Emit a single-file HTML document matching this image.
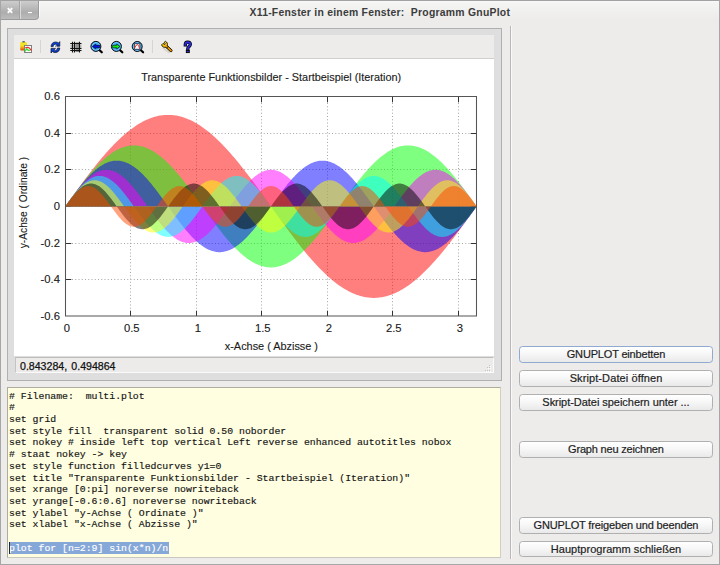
<!DOCTYPE html>
<html><head><meta charset="utf-8">
<style>
*{margin:0;padding:0;box-sizing:border-box}
html,body{width:720px;height:565px;overflow:hidden;background:#edeceb}
body{position:relative;font-family:"Liberation Sans",sans-serif}
.a{position:absolute}
#winL{left:0;top:0;width:1px;height:565px;background:#a6a6a6}
#winR{left:719px;top:0;width:1px;height:565px;background:#a6a6a6}
#winB{left:0;top:564px;width:720px;height:1px;background:#a6a6a6}
#winT{left:0;top:0;width:720px;height:1px;background:#a2a2a2}
#titlebar{left:1px;top:1px;width:718px;height:24px;background:linear-gradient(#fafafa,#f4f4f3 2px,#edeceb 18px)}
#btns{left:1px;top:1px;width:39px;height:19px;border-bottom-right-radius:4px;background:linear-gradient(#cfcfcf,#aeaeae);overflow:hidden}
#btndiv{left:19px;top:0;width:1px;height:19px;background:#dadada}
.btxt{color:#fff;font-weight:bold;font-size:13px;text-align:center;width:19px;top:1px;line-height:16px}
#title{left:249.5px;top:6px;font-weight:bold;font-size:10.4px;letter-spacing:0.25px;color:#3c3c3c;white-space:nowrap;line-height:14px}
#frame{left:7px;top:28px;width:495px;height:353px;border:1px solid #b0b0b0;background:#dedede}
#toolbar{left:14px;top:35px;width:480px;height:23px;background:#edeceb}
.sep{top:40px;width:1px;height:13px;background:#d6d5d4}
#plot{left:14px;top:58px;width:480px;height:298px;background:#fff;border-top:1px solid #d0cfcd}
#svg{left:0;top:0}
#status{left:14px;top:356px;width:480px;height:17px;background:#dedede}
#statbox{left:15px;top:357px;width:479px;height:16px;background:#ecebea;border-top:1px solid #bdbdbd;border-left:1px solid #c4c4c4;border-bottom:1px solid #fafafa;border-right:1px solid #fafafa}
.stt{top:360px;font-size:10.6px;color:#111;line-height:12px;white-space:nowrap;-webkit-text-stroke:0.25px #111}
#sepV{left:510px;top:26px;width:1px;height:533px;background:#b9b8b7;border-right:1px solid #f8f8f8;width:2px}
#editor{left:7px;top:387px;width:494px;height:171px;background:#fffee0;border:1px solid #aeaea0;border-right-color:#d0d0c0;border-bottom-color:#c8c8c0}
#code{left:9px;top:390.5px;font-family:"Liberation Mono",monospace;font-size:9.83px;line-height:11.72px;color:#141414;white-space:pre;font-weight:normal;-webkit-text-stroke:0.15px currentColor}
#sel{left:9px;top:542px;width:160px;height:12px;background:#86a8d8}
#cursor{left:9px;top:542px;width:1px;height:12px;background:#1a2a3a}
.btn{left:519px;width:194px;height:17px;border:1px solid #b0b0b0;border-radius:3.5px;background:linear-gradient(#ffffff,#f6f6f6 50%,#e9e9e9);font-size:11px;color:#1e1e1e;text-align:center;line-height:15.5px;white-space:nowrap;-webkit-text-stroke:0.2px #1e1e1e}
.btn.f{border-color:#8eaad0}
</style></head><body>
<div class="a" id="titlebar"></div>
<div class="a" id="winT"></div>
<div class="a" id="winL"></div>
<div class="a" id="winR"></div>
<div class="a" id="winB"></div>
<svg class="a" style="left:0;top:0" width="44" height="24" viewBox="0 0 44 24">
<defs><linearGradient id="gBt" x1="0" y1="0" x2="0" y2="1"><stop offset="0" stop-color="#cdcdcd"/><stop offset="0.6" stop-color="#adadad"/><stop offset="1" stop-color="#bebebe"/></linearGradient></defs>
<path d="M1 1H39V16A4 4 0 0 1 35 20H1Z" fill="url(#gBt)"/>
<path d="M38.5 1V16A3.5 3.5 0 0 1 35 19.5H1" fill="none" stroke="#9c9c9c" stroke-width="1"/>
<path d="M39.5 2V16.5" stroke="#fbfbfb" stroke-width="1"/>
<rect x="19" y="1" width="1" height="18" fill="#a4a4a4"/>
<rect x="20" y="1" width="1" height="18" fill="#dadada"/>
<path d="M7.8 8.2L12.2 12.8M12.2 8.2L7.8 12.8" stroke="#fff" stroke-width="1.9"/>
<rect x="28" y="12" width="4" height="1.1" fill="#fff"/>
</svg>
<div class="a" id="title">X11-Fenster in einem Fenster:&nbsp; Programm GnuPlot</div>

<div class="a" id="frame"></div>
<div class="a" id="toolbar"></div>
<div class="a sep" style="left:40px"></div>
<div class="a sep" style="left:152px"></div>

<svg class="a" style="left:0;top:0" width="720" height="60" viewBox="0 0 720 60">
<defs>
<linearGradient id="gY" x1="0" y1="0" x2="0" y2="1"><stop offset="0" stop-color="#f0e830"/><stop offset="0.45" stop-color="#f4e020"/><stop offset="1" stop-color="#e04a08"/></linearGradient>
<radialGradient id="gB" cx="0.5" cy="0.5" r="0.5"><stop offset="0" stop-color="#2a8ae8"/><stop offset="0.55" stop-color="#3aa4f4"/><stop offset="0.8" stop-color="#70c8ff"/><stop offset="1" stop-color="#1060c0"/></radialGradient>
<linearGradient id="gW" x1="0" y1="0" x2="1" y2="1"><stop offset="0" stop-color="#f0f020"/><stop offset="0.5" stop-color="#f8c010"/><stop offset="1" stop-color="#f09000"/></linearGradient>
<linearGradient id="gR" x1="0" y1="0" x2="0" y2="1"><stop offset="0" stop-color="#1050f0"/><stop offset="1" stop-color="#0828b0"/></linearGradient>
</defs>
<!-- clipboard -->
<rect x="20.2" y="42" width="6.8" height="8.4" rx="1.2" fill="url(#gY)"/>
<rect x="22.3" y="41" width="2.6" height="1.6" rx="0.6" fill="#6a6a6a"/>
<rect x="24.5" y="45.5" width="7" height="7" fill="#fff" stroke="#808080" stroke-width="1"/>
<path d="M25.3 47.6 L28.2 47.4 Q29.5 47.6 31.4 50.6" fill="none" stroke="#f03030" stroke-width="1.1"/>
<path d="M25.3 51.5 L26.3 48.8 L27.3 49.5 L28.3 50.3 L30 50.2" fill="none" stroke="#30e030" stroke-width="1.3"/>
<!-- refresh -->
<g stroke="#101828" stroke-width="0.7" fill="url(#gR)" stroke-linejoin="round">
<path d="M51 46.6 C51 43.7 53.2 42 55.6 42 C56.8 42 57.8 42.4 58.5 43.1 L59.8 41.6 L59.8 46.2 L55.3 46.2 L56.9 44.7 C56.5 44.3 56 44.2 55.5 44.2 C54.2 44.2 53.4 45.2 53.4 46.6 Z"/>
<path d="M59.8 48 C59.8 50.9 57.6 52.6 55.2 52.6 C54 52.6 53 52.2 52.3 51.5 L51 53 L51 48.4 L55.5 48.4 L53.9 49.9 C54.3 50.3 54.8 50.4 55.3 50.4 C56.6 50.4 57.4 49.4 57.4 48 Z"/>
</g>
<path d="M53.5 46.3 Q55.3 45.3 57 46.3" stroke="#fff" stroke-width="0.9" fill="none" opacity="0.8"/>
<!-- grid -->
<rect x="75.5" y="42.5" width="3.5" height="9.5" fill="#8a8a8a"/>
<rect x="70.5" y="44.5" width="11" height="3.5" fill="#9a9a9a" opacity="0.6"/>
<g stroke="#111" stroke-width="1.1">
<path d="M72.5 41.8v10.6M74.5 41.8v10.6M79.5 41.8v10.6M70.3 43.5h11.2M70.3 48.5h11.2M70.3 50.5h11.2"/>
</g>
<!-- zoom prev -->
<path d="M99.6 50.2 L101.8 52.3" stroke="#000" stroke-width="2.2" stroke-linecap="round"/>
<circle cx="95.9" cy="46.4" r="5" fill="url(#gB)" stroke="#101010" stroke-width="1"/>
<path d="M92.3 46.5 L95.6 44.2 L95.8 45.3 L99.8 45.3 L99.8 47.8 L95.8 47.8 L95.6 48.8 Z" fill="#0010e8" stroke="#000" stroke-width="0.6" stroke-linejoin="round"/>
<!-- zoom next -->
<path d="M120.1 50.2 L122.3 52.3" stroke="#000" stroke-width="2.2" stroke-linecap="round"/>
<circle cx="116.4" cy="46.4" r="5" fill="url(#gB)" stroke="#101010" stroke-width="1"/>
<path d="M120.1 46.5 L116.8 44.2 L116.6 45.3 L112.6 45.3 L112.6 47.8 L116.6 47.8 L116.8 48.8 Z" fill="#10f010" stroke="#000" stroke-width="0.6" stroke-linejoin="round"/>
<!-- autoscale -->
<path d="M140.9 50.2 L143.1 52.3" stroke="#000" stroke-width="2.2" stroke-linecap="round"/>
<circle cx="137.2" cy="46.5" r="5" fill="url(#gB)" stroke="#101010" stroke-width="1"/>
<rect x="134.3" y="43.8" width="5.6" height="5.4" fill="#fff" stroke="#101010" stroke-width="0.7"/>
<path d="M134.9 47.8 Q136.4 43.8 137.6 44.6 Q138.9 45.2 139.5 48.6" fill="none" stroke="#f03030" stroke-width="1"/>
<!-- wrench -->
<path d="M163.2 48 L168.8 52.4" stroke="#c8b898" stroke-width="1.6" opacity="0.5" stroke-linecap="round"/>
<path d="M166 46 L171 50.6" stroke="#000" stroke-width="3" stroke-linecap="round"/>
<path d="M166 46 L171 50.6" stroke="#f0a000" stroke-width="1.6" stroke-linecap="round"/>
<path d="M161.6 44.8 L163 43.4 L164.6 44.6 L165.2 43.9 L164.2 42.3 L165.4 41.3 C167.3 42 167.8 44 167.3 45.8 L168 46.6 L166.6 48 L165.7 47.3 C163.8 47.6 162.1 46.8 161.6 44.8 Z" fill="url(#gW)" stroke="#000" stroke-width="0.8" stroke-linejoin="round"/>
<!-- help -->
<path d="M185.3 44.8 C185.3 42.9 186.4 42.2 187.7 42.2 C189.3 42.2 190.3 43.1 190.3 44.5 C190.3 46.3 187.8 46.7 187.8 48.7" fill="none" stroke="#000" stroke-width="3.3" stroke-linecap="square"/>
<path d="M185.3 44.8 C185.3 42.9 186.4 42.2 187.7 42.2 C189.3 42.2 190.3 43.1 190.3 44.5 C190.3 46.3 187.8 46.7 187.8 48.7" fill="none" stroke="#2a2ad8" stroke-width="1.9" stroke-linecap="square"/>
<rect x="186.3" y="50.4" width="3" height="2.2" fill="#2a2ad8" stroke="#000" stroke-width="0.9"/>
</svg>

<div class="a" id="plot"></div>
<svg class="a" id="svg" width="720" height="360" viewBox="0 0 720 360" style="left:0;top:0">
<g stroke="#a6a6a6" stroke-width="1" stroke-dasharray="1 2.25">
<line x1="130.5" y1="96.5" x2="130.5" y2="315.5"/>
<line x1="196.5" y1="96.5" x2="196.5" y2="315.5"/>
<line x1="261.5" y1="96.5" x2="261.5" y2="315.5"/>
<line x1="327.5" y1="96.5" x2="327.5" y2="315.5"/>
<line x1="392.5" y1="96.5" x2="392.5" y2="315.5"/>
<line x1="458.5" y1="96.5" x2="458.5" y2="315.5"/>
<line x1="65.5" y1="133.5" x2="476.5" y2="133.5"/>
<line x1="65.5" y1="169.5" x2="476.5" y2="169.5"/>
<line x1="65.5" y1="206.5" x2="476.5" y2="206.5"/>
<line x1="65.5" y1="243.5" x2="476.5" y2="243.5"/>
<line x1="65.5" y1="279.5" x2="476.5" y2="279.5"/>
</g>
<path d="M130.5 316v-5.3M130.5 96v6.3M196.5 316v-5.3M196.5 96v6.3M261.5 316v-5.3M261.5 96v6.3M327.5 316v-5.3M327.5 96v6.3M392.5 316v-5.3M392.5 96v6.3M458.5 316v-5.3M458.5 96v6.3M65 133.5h6.3M477 133.5h-6.3M65 169.5h6.3M477 169.5h-6.3M65 206.5h6.3M477 206.5h-6.3M65 243.5h6.3M477 243.5h-6.3M65 279.5h6.3M477 279.5h-6.3" stroke="#333" stroke-width="1" fill="none"/>
<path d="M65.30 206.40 L65.30 206.40 L66.33 204.96 L67.36 203.53 L68.38 202.09 L69.41 200.65 L70.44 199.22 L71.47 197.79 L72.50 196.36 L73.53 194.93 L74.55 193.51 L75.58 192.09 L76.61 190.67 L77.64 189.25 L78.67 187.84 L79.70 186.44 L80.72 185.04 L81.75 183.64 L82.78 182.26 L83.81 180.87 L84.84 179.50 L85.87 178.12 L86.89 176.76 L87.92 175.41 L88.95 174.06 L89.98 172.72 L91.01 171.38 L92.04 170.06 L93.06 168.75 L94.09 167.44 L95.12 166.15 L96.15 164.86 L97.18 163.58 L98.21 162.32 L99.23 161.07 L100.26 159.82 L101.29 158.59 L102.32 157.37 L103.35 156.16 L104.38 154.97 L105.40 153.79 L106.43 152.62 L107.46 151.46 L108.49 150.32 L109.52 149.19 L110.55 148.08 L111.57 146.98 L112.60 145.89 L113.63 144.82 L114.66 143.76 L115.69 142.72 L116.72 141.70 L117.74 140.69 L118.77 139.70 L119.80 138.72 L120.83 137.76 L121.86 136.82 L122.89 135.90 L123.91 134.99 L124.94 134.10 L125.97 133.23 L127.00 132.37 L128.03 131.54 L129.06 130.72 L130.08 129.92 L131.11 129.14 L132.14 128.38 L133.17 127.64 L134.20 126.92 L135.23 126.22 L136.25 125.54 L137.28 124.87 L138.31 124.23 L139.34 123.61 L140.37 123.01 L141.40 122.43 L142.42 121.87 L143.45 121.33 L144.48 120.81 L145.51 120.31 L146.54 119.83 L147.57 119.38 L148.59 118.94 L149.62 118.53 L150.65 118.14 L151.68 117.77 L152.71 117.43 L153.74 117.10 L154.76 116.80 L155.79 116.52 L156.82 116.26 L157.85 116.03 L158.88 115.81 L159.91 115.62 L160.93 115.45 L161.96 115.31 L162.99 115.18 L164.02 115.08 L165.05 115.00 L166.08 114.95 L167.10 114.91 L168.13 114.90 L169.16 114.91 L170.19 114.95 L171.22 115.00 L172.25 115.08 L173.27 115.18 L174.30 115.31 L175.33 115.45 L176.36 115.62 L177.39 115.81 L178.42 116.03 L179.44 116.26 L180.47 116.52 L181.50 116.80 L182.53 117.10 L183.56 117.43 L184.59 117.77 L185.61 118.14 L186.64 118.53 L187.67 118.94 L188.70 119.38 L189.73 119.83 L190.76 120.31 L191.78 120.81 L192.81 121.33 L193.84 121.87 L194.87 122.43 L195.90 123.01 L196.93 123.61 L197.95 124.23 L198.98 124.87 L200.01 125.54 L201.04 126.22 L202.07 126.92 L203.10 127.64 L204.12 128.38 L205.15 129.14 L206.18 129.92 L207.21 130.72 L208.24 131.54 L209.27 132.37 L210.29 133.23 L211.32 134.10 L212.35 134.99 L213.38 135.90 L214.41 136.82 L215.43 137.76 L216.46 138.72 L217.49 139.70 L218.52 140.69 L219.55 141.70 L220.58 142.72 L221.60 143.76 L222.63 144.82 L223.66 145.89 L224.69 146.98 L225.72 148.08 L226.75 149.19 L227.77 150.32 L228.80 151.46 L229.83 152.62 L230.86 153.79 L231.89 154.97 L232.92 156.16 L233.94 157.37 L234.97 158.59 L236.00 159.82 L237.03 161.07 L238.06 162.32 L239.09 163.58 L240.11 164.86 L241.14 166.15 L242.17 167.44 L243.20 168.75 L244.23 170.06 L245.26 171.38 L246.28 172.72 L247.31 174.06 L248.34 175.41 L249.37 176.76 L250.40 178.12 L251.43 179.50 L252.45 180.87 L253.48 182.26 L254.51 183.64 L255.54 185.04 L256.57 186.44 L257.60 187.84 L258.62 189.25 L259.65 190.67 L260.68 192.09 L261.71 193.51 L262.74 194.93 L263.77 196.36 L264.79 197.79 L265.82 199.22 L266.85 200.65 L267.88 202.09 L268.91 203.53 L269.94 204.96 L270.96 206.40 L271.99 207.84 L273.02 209.27 L274.05 210.71 L275.08 212.15 L276.11 213.58 L277.13 215.01 L278.16 216.44 L279.19 217.87 L280.22 219.29 L281.25 220.71 L282.28 222.13 L283.30 223.55 L284.33 224.96 L285.36 226.36 L286.39 227.76 L287.42 229.16 L288.45 230.54 L289.47 231.93 L290.50 233.30 L291.53 234.68 L292.56 236.04 L293.59 237.39 L294.62 238.74 L295.64 240.08 L296.67 241.42 L297.70 242.74 L298.73 244.05 L299.76 245.36 L300.79 246.65 L301.81 247.94 L302.84 249.22 L303.87 250.48 L304.90 251.73 L305.93 252.98 L306.96 254.21 L307.98 255.43 L309.01 256.64 L310.04 257.83 L311.07 259.01 L312.10 260.18 L313.13 261.34 L314.15 262.48 L315.18 263.61 L316.21 264.72 L317.24 265.82 L318.27 266.91 L319.30 267.98 L320.32 269.04 L321.35 270.08 L322.38 271.10 L323.41 272.11 L324.44 273.10 L325.47 274.08 L326.49 275.04 L327.52 275.98 L328.55 276.90 L329.58 277.81 L330.61 278.70 L331.64 279.57 L332.66 280.43 L333.69 281.26 L334.72 282.08 L335.75 282.88 L336.78 283.66 L337.81 284.42 L338.83 285.16 L339.86 285.88 L340.89 286.58 L341.92 287.26 L342.95 287.93 L343.98 288.57 L345.00 289.19 L346.03 289.79 L347.06 290.37 L348.09 290.93 L349.12 291.47 L350.15 291.99 L351.17 292.49 L352.20 292.97 L353.23 293.42 L354.26 293.86 L355.29 294.27 L356.32 294.66 L357.34 295.03 L358.37 295.37 L359.40 295.70 L360.43 296.00 L361.46 296.28 L362.49 296.54 L363.51 296.77 L364.54 296.99 L365.57 297.18 L366.60 297.35 L367.63 297.49 L368.65 297.62 L369.68 297.72 L370.71 297.80 L371.74 297.85 L372.77 297.89 L373.80 297.90 L374.82 297.89 L375.85 297.85 L376.88 297.80 L377.91 297.72 L378.94 297.62 L379.97 297.49 L380.99 297.35 L382.02 297.18 L383.05 296.99 L384.08 296.77 L385.11 296.54 L386.14 296.28 L387.16 296.00 L388.19 295.70 L389.22 295.37 L390.25 295.03 L391.28 294.66 L392.31 294.27 L393.33 293.86 L394.36 293.42 L395.39 292.97 L396.42 292.49 L397.45 291.99 L398.48 291.47 L399.50 290.93 L400.53 290.37 L401.56 289.79 L402.59 289.19 L403.62 288.57 L404.65 287.93 L405.67 287.26 L406.70 286.58 L407.73 285.88 L408.76 285.16 L409.79 284.42 L410.82 283.66 L411.84 282.88 L412.87 282.08 L413.90 281.26 L414.93 280.43 L415.96 279.57 L416.99 278.70 L418.01 277.81 L419.04 276.90 L420.07 275.98 L421.10 275.04 L422.13 274.08 L423.16 273.10 L424.18 272.11 L425.21 271.10 L426.24 270.08 L427.27 269.04 L428.30 267.98 L429.33 266.91 L430.35 265.82 L431.38 264.72 L432.41 263.61 L433.44 262.48 L434.47 261.34 L435.50 260.18 L436.52 259.01 L437.55 257.83 L438.58 256.64 L439.61 255.43 L440.64 254.21 L441.67 252.98 L442.69 251.73 L443.72 250.48 L444.75 249.22 L445.78 247.94 L446.81 246.65 L447.84 245.36 L448.86 244.05 L449.89 242.74 L450.92 241.42 L451.95 240.08 L452.98 238.74 L454.01 237.39 L455.03 236.04 L456.06 234.68 L457.09 233.30 L458.12 231.93 L459.15 230.54 L460.18 229.16 L461.20 227.76 L462.23 226.36 L463.26 224.96 L464.29 223.55 L465.32 222.13 L466.35 220.71 L467.37 219.29 L468.40 217.87 L469.43 216.44 L470.46 215.01 L471.49 213.58 L472.52 212.15 L473.54 210.71 L474.57 209.27 L475.60 207.84 L476.63 206.40 L476.63 206.40 Z" fill="#ff0000" fill-opacity="0.5"/>
<path d="M65.30 206.40 L65.30 206.40 L66.33 204.96 L67.36 203.53 L68.38 202.09 L69.41 200.66 L70.44 199.23 L71.47 197.81 L72.50 196.38 L73.53 194.97 L74.55 193.56 L75.58 192.16 L76.61 190.77 L77.64 189.38 L78.67 188.01 L79.70 186.64 L80.72 185.29 L81.75 183.94 L82.78 182.61 L83.81 181.30 L84.84 179.99 L85.87 178.71 L86.89 177.43 L87.92 176.18 L88.95 174.94 L89.98 173.71 L91.01 172.51 L92.04 171.32 L93.06 170.16 L94.09 169.01 L95.12 167.89 L96.15 166.78 L97.18 165.70 L98.21 164.64 L99.23 163.61 L100.26 162.59 L101.29 161.61 L102.32 160.64 L103.35 159.71 L104.38 158.79 L105.40 157.91 L106.43 157.05 L107.46 156.22 L108.49 155.42 L109.52 154.64 L110.55 153.89 L111.57 153.18 L112.60 152.49 L113.63 151.83 L114.66 151.21 L115.69 150.61 L116.72 150.04 L117.74 149.51 L118.77 149.01 L119.80 148.54 L120.83 148.10 L121.86 147.69 L122.89 147.32 L123.91 146.98 L124.94 146.67 L125.97 146.39 L127.00 146.15 L128.03 145.94 L129.06 145.77 L130.08 145.63 L131.11 145.52 L132.14 145.45 L133.17 145.41 L134.20 145.40 L135.23 145.43 L136.25 145.49 L137.28 145.59 L138.31 145.72 L139.34 145.88 L140.37 146.08 L141.40 146.31 L142.42 146.57 L143.45 146.87 L144.48 147.20 L145.51 147.56 L146.54 147.96 L147.57 148.39 L148.59 148.85 L149.62 149.34 L150.65 149.86 L151.68 150.42 L152.71 151.00 L153.74 151.62 L154.76 152.27 L155.79 152.95 L156.82 153.65 L157.85 154.39 L158.88 155.15 L159.91 155.95 L160.93 156.77 L161.96 157.62 L162.99 158.50 L164.02 159.40 L165.05 160.33 L166.08 161.28 L167.10 162.26 L168.13 163.27 L169.16 164.29 L170.19 165.35 L171.22 166.42 L172.25 167.52 L173.27 168.64 L174.30 169.77 L175.33 170.93 L176.36 172.11 L177.39 173.31 L178.42 174.53 L179.44 175.76 L180.47 177.01 L181.50 178.28 L182.53 179.56 L183.56 180.86 L184.59 182.17 L185.61 183.50 L186.64 184.84 L187.67 186.19 L188.70 187.55 L189.73 188.92 L190.76 190.30 L191.78 191.69 L192.81 193.09 L193.84 194.50 L194.87 195.91 L195.90 197.33 L196.93 198.75 L197.95 200.18 L198.98 201.61 L200.01 203.05 L201.04 204.48 L202.07 205.92 L203.10 207.36 L204.12 208.79 L205.15 210.23 L206.18 211.66 L207.21 213.09 L208.24 214.52 L209.27 215.94 L210.29 217.36 L211.32 218.77 L212.35 220.17 L213.38 221.57 L214.41 222.96 L215.43 224.34 L216.46 225.71 L217.49 227.06 L218.52 228.41 L219.55 229.74 L220.58 231.06 L221.60 232.37 L222.63 233.67 L223.66 234.94 L224.69 236.21 L225.72 237.45 L226.75 238.68 L227.77 239.89 L228.80 241.08 L229.83 242.25 L230.86 243.41 L231.89 244.54 L232.92 245.65 L233.94 246.74 L234.97 247.81 L236.00 248.85 L237.03 249.87 L238.06 250.87 L239.09 251.84 L240.11 252.78 L241.14 253.71 L242.17 254.60 L243.20 255.47 L244.23 256.31 L245.26 257.12 L246.28 257.90 L247.31 258.66 L248.34 259.39 L249.37 260.08 L250.40 260.75 L251.43 261.39 L252.45 262.00 L253.48 262.57 L254.51 263.12 L255.54 263.63 L256.57 264.11 L257.60 264.56 L258.62 264.98 L259.65 265.36 L260.68 265.71 L261.71 266.03 L262.74 266.32 L263.77 266.57 L264.79 266.79 L265.82 266.98 L266.85 267.13 L267.88 267.25 L268.91 267.33 L269.94 267.38 L270.96 267.40 L271.99 267.38 L273.02 267.33 L274.05 267.25 L275.08 267.13 L276.11 266.98 L277.13 266.79 L278.16 266.57 L279.19 266.32 L280.22 266.03 L281.25 265.71 L282.28 265.36 L283.30 264.98 L284.33 264.56 L285.36 264.11 L286.39 263.63 L287.42 263.12 L288.45 262.57 L289.47 262.00 L290.50 261.39 L291.53 260.75 L292.56 260.08 L293.59 259.39 L294.62 258.66 L295.64 257.90 L296.67 257.12 L297.70 256.31 L298.73 255.47 L299.76 254.60 L300.79 253.71 L301.81 252.78 L302.84 251.84 L303.87 250.87 L304.90 249.87 L305.93 248.85 L306.96 247.81 L307.98 246.74 L309.01 245.65 L310.04 244.54 L311.07 243.41 L312.10 242.25 L313.13 241.08 L314.15 239.89 L315.18 238.68 L316.21 237.45 L317.24 236.21 L318.27 234.94 L319.30 233.67 L320.32 232.37 L321.35 231.06 L322.38 229.74 L323.41 228.41 L324.44 227.06 L325.47 225.71 L326.49 224.34 L327.52 222.96 L328.55 221.57 L329.58 220.17 L330.61 218.77 L331.64 217.36 L332.66 215.94 L333.69 214.52 L334.72 213.09 L335.75 211.66 L336.78 210.23 L337.81 208.79 L338.83 207.36 L339.86 205.92 L340.89 204.48 L341.92 203.05 L342.95 201.61 L343.98 200.18 L345.00 198.75 L346.03 197.33 L347.06 195.91 L348.09 194.50 L349.12 193.09 L350.15 191.69 L351.17 190.30 L352.20 188.92 L353.23 187.55 L354.26 186.19 L355.29 184.84 L356.32 183.50 L357.34 182.17 L358.37 180.86 L359.40 179.56 L360.43 178.28 L361.46 177.01 L362.49 175.76 L363.51 174.53 L364.54 173.31 L365.57 172.11 L366.60 170.93 L367.63 169.77 L368.65 168.64 L369.68 167.52 L370.71 166.42 L371.74 165.35 L372.77 164.29 L373.80 163.27 L374.82 162.26 L375.85 161.28 L376.88 160.33 L377.91 159.40 L378.94 158.50 L379.97 157.62 L380.99 156.77 L382.02 155.95 L383.05 155.15 L384.08 154.39 L385.11 153.65 L386.14 152.95 L387.16 152.27 L388.19 151.62 L389.22 151.00 L390.25 150.42 L391.28 149.86 L392.31 149.34 L393.33 148.85 L394.36 148.39 L395.39 147.96 L396.42 147.56 L397.45 147.20 L398.48 146.87 L399.50 146.57 L400.53 146.31 L401.56 146.08 L402.59 145.88 L403.62 145.72 L404.65 145.59 L405.67 145.49 L406.70 145.43 L407.73 145.40 L408.76 145.41 L409.79 145.45 L410.82 145.52 L411.84 145.63 L412.87 145.77 L413.90 145.94 L414.93 146.15 L415.96 146.39 L416.99 146.67 L418.01 146.98 L419.04 147.32 L420.07 147.69 L421.10 148.10 L422.13 148.54 L423.16 149.01 L424.18 149.51 L425.21 150.04 L426.24 150.61 L427.27 151.21 L428.30 151.83 L429.33 152.49 L430.35 153.18 L431.38 153.89 L432.41 154.64 L433.44 155.42 L434.47 156.22 L435.50 157.05 L436.52 157.91 L437.55 158.79 L438.58 159.71 L439.61 160.64 L440.64 161.61 L441.67 162.59 L442.69 163.61 L443.72 164.64 L444.75 165.70 L445.78 166.78 L446.81 167.89 L447.84 169.01 L448.86 170.16 L449.89 171.32 L450.92 172.51 L451.95 173.71 L452.98 174.94 L454.01 176.18 L455.03 177.43 L456.06 178.71 L457.09 179.99 L458.12 181.30 L459.15 182.61 L460.18 183.94 L461.20 185.29 L462.23 186.64 L463.26 188.01 L464.29 189.38 L465.32 190.77 L466.35 192.16 L467.37 193.56 L468.40 194.97 L469.43 196.38 L470.46 197.81 L471.49 199.23 L472.52 200.66 L473.54 202.09 L474.57 203.53 L475.60 204.96 L476.63 206.40 L476.63 206.40 Z" fill="#00ff00" fill-opacity="0.5"/>
<path d="M65.30 206.40 L65.30 206.40 L66.33 204.96 L67.36 203.53 L68.38 202.09 L69.41 200.67 L70.44 199.24 L71.47 197.83 L72.50 196.42 L73.53 195.02 L74.55 193.64 L75.58 192.26 L76.61 190.90 L77.64 189.56 L78.67 188.23 L79.70 186.92 L80.72 185.63 L81.75 184.36 L82.78 183.11 L83.81 181.89 L84.84 180.68 L85.87 179.51 L86.89 178.36 L87.92 177.24 L88.95 176.14 L89.98 175.08 L91.01 174.05 L92.04 173.05 L93.06 172.08 L94.09 171.15 L95.12 170.25 L96.15 169.39 L97.18 168.56 L98.21 167.77 L99.23 167.02 L100.26 166.31 L101.29 165.64 L102.32 165.00 L103.35 164.41 L104.38 163.86 L105.40 163.35 L106.43 162.89 L107.46 162.47 L108.49 162.09 L109.52 161.75 L110.55 161.46 L111.57 161.21 L112.60 161.01 L113.63 160.85 L114.66 160.74 L115.69 160.67 L116.72 160.65 L117.74 160.67 L118.77 160.74 L119.80 160.85 L120.83 161.01 L121.86 161.21 L122.89 161.46 L123.91 161.75 L124.94 162.09 L125.97 162.47 L127.00 162.89 L128.03 163.35 L129.06 163.86 L130.08 164.41 L131.11 165.00 L132.14 165.64 L133.17 166.31 L134.20 167.02 L135.23 167.77 L136.25 168.56 L137.28 169.39 L138.31 170.25 L139.34 171.15 L140.37 172.08 L141.40 173.05 L142.42 174.05 L143.45 175.08 L144.48 176.14 L145.51 177.24 L146.54 178.36 L147.57 179.51 L148.59 180.68 L149.62 181.89 L150.65 183.11 L151.68 184.36 L152.71 185.63 L153.74 186.92 L154.76 188.23 L155.79 189.56 L156.82 190.90 L157.85 192.26 L158.88 193.64 L159.91 195.02 L160.93 196.42 L161.96 197.83 L162.99 199.24 L164.02 200.67 L165.05 202.09 L166.08 203.53 L167.10 204.96 L168.13 206.40 L169.16 207.84 L170.19 209.27 L171.22 210.71 L172.25 212.13 L173.27 213.56 L174.30 214.97 L175.33 216.38 L176.36 217.78 L177.39 219.16 L178.42 220.54 L179.44 221.90 L180.47 223.24 L181.50 224.57 L182.53 225.88 L183.56 227.17 L184.59 228.44 L185.61 229.69 L186.64 230.91 L187.67 232.12 L188.70 233.29 L189.73 234.44 L190.76 235.56 L191.78 236.66 L192.81 237.72 L193.84 238.75 L194.87 239.75 L195.90 240.72 L196.93 241.65 L197.95 242.55 L198.98 243.41 L200.01 244.24 L201.04 245.03 L202.07 245.78 L203.10 246.49 L204.12 247.16 L205.15 247.80 L206.18 248.39 L207.21 248.94 L208.24 249.45 L209.27 249.91 L210.29 250.33 L211.32 250.71 L212.35 251.05 L213.38 251.34 L214.41 251.59 L215.43 251.79 L216.46 251.95 L217.49 252.06 L218.52 252.13 L219.55 252.15 L220.58 252.13 L221.60 252.06 L222.63 251.95 L223.66 251.79 L224.69 251.59 L225.72 251.34 L226.75 251.05 L227.77 250.71 L228.80 250.33 L229.83 249.91 L230.86 249.45 L231.89 248.94 L232.92 248.39 L233.94 247.80 L234.97 247.16 L236.00 246.49 L237.03 245.78 L238.06 245.03 L239.09 244.24 L240.11 243.41 L241.14 242.55 L242.17 241.65 L243.20 240.72 L244.23 239.75 L245.26 238.75 L246.28 237.72 L247.31 236.66 L248.34 235.56 L249.37 234.44 L250.40 233.29 L251.43 232.12 L252.45 230.91 L253.48 229.69 L254.51 228.44 L255.54 227.17 L256.57 225.88 L257.60 224.57 L258.62 223.24 L259.65 221.90 L260.68 220.54 L261.71 219.16 L262.74 217.78 L263.77 216.38 L264.79 214.97 L265.82 213.56 L266.85 212.13 L267.88 210.71 L268.91 209.27 L269.94 207.84 L270.96 206.40 L271.99 204.96 L273.02 203.53 L274.05 202.09 L275.08 200.67 L276.11 199.24 L277.13 197.83 L278.16 196.42 L279.19 195.02 L280.22 193.64 L281.25 192.26 L282.28 190.90 L283.30 189.56 L284.33 188.23 L285.36 186.92 L286.39 185.63 L287.42 184.36 L288.45 183.11 L289.47 181.89 L290.50 180.68 L291.53 179.51 L292.56 178.36 L293.59 177.24 L294.62 176.14 L295.64 175.08 L296.67 174.05 L297.70 173.05 L298.73 172.08 L299.76 171.15 L300.79 170.25 L301.81 169.39 L302.84 168.56 L303.87 167.77 L304.90 167.02 L305.93 166.31 L306.96 165.64 L307.98 165.00 L309.01 164.41 L310.04 163.86 L311.07 163.35 L312.10 162.89 L313.13 162.47 L314.15 162.09 L315.18 161.75 L316.21 161.46 L317.24 161.21 L318.27 161.01 L319.30 160.85 L320.32 160.74 L321.35 160.67 L322.38 160.65 L323.41 160.67 L324.44 160.74 L325.47 160.85 L326.49 161.01 L327.52 161.21 L328.55 161.46 L329.58 161.75 L330.61 162.09 L331.64 162.47 L332.66 162.89 L333.69 163.35 L334.72 163.86 L335.75 164.41 L336.78 165.00 L337.81 165.64 L338.83 166.31 L339.86 167.02 L340.89 167.77 L341.92 168.56 L342.95 169.39 L343.98 170.25 L345.00 171.15 L346.03 172.08 L347.06 173.05 L348.09 174.05 L349.12 175.08 L350.15 176.14 L351.17 177.24 L352.20 178.36 L353.23 179.51 L354.26 180.68 L355.29 181.89 L356.32 183.11 L357.34 184.36 L358.37 185.63 L359.40 186.92 L360.43 188.23 L361.46 189.56 L362.49 190.90 L363.51 192.26 L364.54 193.64 L365.57 195.02 L366.60 196.42 L367.63 197.83 L368.65 199.24 L369.68 200.67 L370.71 202.09 L371.74 203.53 L372.77 204.96 L373.80 206.40 L374.82 207.84 L375.85 209.27 L376.88 210.71 L377.91 212.13 L378.94 213.56 L379.97 214.97 L380.99 216.38 L382.02 217.78 L383.05 219.16 L384.08 220.54 L385.11 221.90 L386.14 223.24 L387.16 224.57 L388.19 225.88 L389.22 227.17 L390.25 228.44 L391.28 229.69 L392.31 230.91 L393.33 232.12 L394.36 233.29 L395.39 234.44 L396.42 235.56 L397.45 236.66 L398.48 237.72 L399.50 238.75 L400.53 239.75 L401.56 240.72 L402.59 241.65 L403.62 242.55 L404.65 243.41 L405.67 244.24 L406.70 245.03 L407.73 245.78 L408.76 246.49 L409.79 247.16 L410.82 247.80 L411.84 248.39 L412.87 248.94 L413.90 249.45 L414.93 249.91 L415.96 250.33 L416.99 250.71 L418.01 251.05 L419.04 251.34 L420.07 251.59 L421.10 251.79 L422.13 251.95 L423.16 252.06 L424.18 252.13 L425.21 252.15 L426.24 252.13 L427.27 252.06 L428.30 251.95 L429.33 251.79 L430.35 251.59 L431.38 251.34 L432.41 251.05 L433.44 250.71 L434.47 250.33 L435.50 249.91 L436.52 249.45 L437.55 248.94 L438.58 248.39 L439.61 247.80 L440.64 247.16 L441.67 246.49 L442.69 245.78 L443.72 245.03 L444.75 244.24 L445.78 243.41 L446.81 242.55 L447.84 241.65 L448.86 240.72 L449.89 239.75 L450.92 238.75 L451.95 237.72 L452.98 236.66 L454.01 235.56 L455.03 234.44 L456.06 233.29 L457.09 232.12 L458.12 230.91 L459.15 229.69 L460.18 228.44 L461.20 227.17 L462.23 225.88 L463.26 224.57 L464.29 223.24 L465.32 221.90 L466.35 220.54 L467.37 219.16 L468.40 217.78 L469.43 216.38 L470.46 214.97 L471.49 213.56 L472.52 212.13 L473.54 210.71 L474.57 209.27 L475.60 207.84 L476.63 206.40 L476.63 206.40 Z" fill="#0000ff" fill-opacity="0.5"/>
<path d="M65.30 206.40 L65.30 206.40 L66.33 204.96 L67.36 203.53 L68.38 202.10 L69.41 200.67 L70.44 199.26 L71.47 197.86 L72.50 196.47 L73.53 195.09 L74.55 193.73 L75.58 192.39 L76.61 191.08 L77.64 189.78 L78.67 188.52 L79.70 187.28 L80.72 186.07 L81.75 184.89 L82.78 183.74 L83.81 182.63 L84.84 181.56 L85.87 180.52 L86.89 179.52 L87.92 178.57 L88.95 177.66 L89.98 176.79 L91.01 175.97 L92.04 175.19 L93.06 174.47 L94.09 173.79 L95.12 173.16 L96.15 172.59 L97.18 172.06 L98.21 171.59 L99.23 171.17 L100.26 170.81 L101.29 170.50 L102.32 170.25 L103.35 170.05 L104.38 169.91 L105.40 169.83 L106.43 169.80 L107.46 169.83 L108.49 169.91 L109.52 170.05 L110.55 170.25 L111.57 170.50 L112.60 170.81 L113.63 171.17 L114.66 171.59 L115.69 172.06 L116.72 172.59 L117.74 173.16 L118.77 173.79 L119.80 174.47 L120.83 175.19 L121.86 175.97 L122.89 176.79 L123.91 177.66 L124.94 178.57 L125.97 179.52 L127.00 180.52 L128.03 181.56 L129.06 182.63 L130.08 183.74 L131.11 184.89 L132.14 186.07 L133.17 187.28 L134.20 188.52 L135.23 189.78 L136.25 191.08 L137.28 192.39 L138.31 193.73 L139.34 195.09 L140.37 196.47 L141.40 197.86 L142.42 199.26 L143.45 200.67 L144.48 202.10 L145.51 203.53 L146.54 204.96 L147.57 206.40 L148.59 207.84 L149.62 209.27 L150.65 210.70 L151.68 212.13 L152.71 213.54 L153.74 214.94 L154.76 216.33 L155.79 217.71 L156.82 219.07 L157.85 220.41 L158.88 221.72 L159.91 223.02 L160.93 224.28 L161.96 225.52 L162.99 226.73 L164.02 227.91 L165.05 229.06 L166.08 230.17 L167.10 231.24 L168.13 232.28 L169.16 233.28 L170.19 234.23 L171.22 235.14 L172.25 236.01 L173.27 236.83 L174.30 237.61 L175.33 238.33 L176.36 239.01 L177.39 239.64 L178.42 240.21 L179.44 240.74 L180.47 241.21 L181.50 241.63 L182.53 241.99 L183.56 242.30 L184.59 242.55 L185.61 242.75 L186.64 242.89 L187.67 242.97 L188.70 243.00 L189.73 242.97 L190.76 242.89 L191.78 242.75 L192.81 242.55 L193.84 242.30 L194.87 241.99 L195.90 241.63 L196.93 241.21 L197.95 240.74 L198.98 240.21 L200.01 239.64 L201.04 239.01 L202.07 238.33 L203.10 237.61 L204.12 236.83 L205.15 236.01 L206.18 235.14 L207.21 234.23 L208.24 233.28 L209.27 232.28 L210.29 231.24 L211.32 230.17 L212.35 229.06 L213.38 227.91 L214.41 226.73 L215.43 225.52 L216.46 224.28 L217.49 223.02 L218.52 221.72 L219.55 220.41 L220.58 219.07 L221.60 217.71 L222.63 216.33 L223.66 214.94 L224.69 213.54 L225.72 212.13 L226.75 210.70 L227.77 209.27 L228.80 207.84 L229.83 206.40 L230.86 204.96 L231.89 203.53 L232.92 202.10 L233.94 200.67 L234.97 199.26 L236.00 197.86 L237.03 196.47 L238.06 195.09 L239.09 193.73 L240.11 192.39 L241.14 191.08 L242.17 189.78 L243.20 188.52 L244.23 187.28 L245.26 186.07 L246.28 184.89 L247.31 183.74 L248.34 182.63 L249.37 181.56 L250.40 180.52 L251.43 179.52 L252.45 178.57 L253.48 177.66 L254.51 176.79 L255.54 175.97 L256.57 175.19 L257.60 174.47 L258.62 173.79 L259.65 173.16 L260.68 172.59 L261.71 172.06 L262.74 171.59 L263.77 171.17 L264.79 170.81 L265.82 170.50 L266.85 170.25 L267.88 170.05 L268.91 169.91 L269.94 169.83 L270.96 169.80 L271.99 169.83 L273.02 169.91 L274.05 170.05 L275.08 170.25 L276.11 170.50 L277.13 170.81 L278.16 171.17 L279.19 171.59 L280.22 172.06 L281.25 172.59 L282.28 173.16 L283.30 173.79 L284.33 174.47 L285.36 175.19 L286.39 175.97 L287.42 176.79 L288.45 177.66 L289.47 178.57 L290.50 179.52 L291.53 180.52 L292.56 181.56 L293.59 182.63 L294.62 183.74 L295.64 184.89 L296.67 186.07 L297.70 187.28 L298.73 188.52 L299.76 189.78 L300.79 191.08 L301.81 192.39 L302.84 193.73 L303.87 195.09 L304.90 196.47 L305.93 197.86 L306.96 199.26 L307.98 200.67 L309.01 202.10 L310.04 203.53 L311.07 204.96 L312.10 206.40 L313.13 207.84 L314.15 209.27 L315.18 210.70 L316.21 212.13 L317.24 213.54 L318.27 214.94 L319.30 216.33 L320.32 217.71 L321.35 219.07 L322.38 220.41 L323.41 221.72 L324.44 223.02 L325.47 224.28 L326.49 225.52 L327.52 226.73 L328.55 227.91 L329.58 229.06 L330.61 230.17 L331.64 231.24 L332.66 232.28 L333.69 233.28 L334.72 234.23 L335.75 235.14 L336.78 236.01 L337.81 236.83 L338.83 237.61 L339.86 238.33 L340.89 239.01 L341.92 239.64 L342.95 240.21 L343.98 240.74 L345.00 241.21 L346.03 241.63 L347.06 241.99 L348.09 242.30 L349.12 242.55 L350.15 242.75 L351.17 242.89 L352.20 242.97 L353.23 243.00 L354.26 242.97 L355.29 242.89 L356.32 242.75 L357.34 242.55 L358.37 242.30 L359.40 241.99 L360.43 241.63 L361.46 241.21 L362.49 240.74 L363.51 240.21 L364.54 239.64 L365.57 239.01 L366.60 238.33 L367.63 237.61 L368.65 236.83 L369.68 236.01 L370.71 235.14 L371.74 234.23 L372.77 233.28 L373.80 232.28 L374.82 231.24 L375.85 230.17 L376.88 229.06 L377.91 227.91 L378.94 226.73 L379.97 225.52 L380.99 224.28 L382.02 223.02 L383.05 221.72 L384.08 220.41 L385.11 219.07 L386.14 217.71 L387.16 216.33 L388.19 214.94 L389.22 213.54 L390.25 212.13 L391.28 210.70 L392.31 209.27 L393.33 207.84 L394.36 206.40 L395.39 204.96 L396.42 203.53 L397.45 202.10 L398.48 200.67 L399.50 199.26 L400.53 197.86 L401.56 196.47 L402.59 195.09 L403.62 193.73 L404.65 192.39 L405.67 191.08 L406.70 189.78 L407.73 188.52 L408.76 187.28 L409.79 186.07 L410.82 184.89 L411.84 183.74 L412.87 182.63 L413.90 181.56 L414.93 180.52 L415.96 179.52 L416.99 178.57 L418.01 177.66 L419.04 176.79 L420.07 175.97 L421.10 175.19 L422.13 174.47 L423.16 173.79 L424.18 173.16 L425.21 172.59 L426.24 172.06 L427.27 171.59 L428.30 171.17 L429.33 170.81 L430.35 170.50 L431.38 170.25 L432.41 170.05 L433.44 169.91 L434.47 169.83 L435.50 169.80 L436.52 169.83 L437.55 169.91 L438.58 170.05 L439.61 170.25 L440.64 170.50 L441.67 170.81 L442.69 171.17 L443.72 171.59 L444.75 172.06 L445.78 172.59 L446.81 173.16 L447.84 173.79 L448.86 174.47 L449.89 175.19 L450.92 175.97 L451.95 176.79 L452.98 177.66 L454.01 178.57 L455.03 179.52 L456.06 180.52 L457.09 181.56 L458.12 182.63 L459.15 183.74 L460.18 184.89 L461.20 186.07 L462.23 187.28 L463.26 188.52 L464.29 189.78 L465.32 191.08 L466.35 192.39 L467.37 193.73 L468.40 195.09 L469.43 196.47 L470.46 197.86 L471.49 199.26 L472.52 200.67 L473.54 202.10 L474.57 203.53 L475.60 204.96 L476.63 206.40 L476.63 206.40 Z" fill="#ff00ff" fill-opacity="0.5"/>
<path d="M65.30 206.40 L65.30 206.40 L66.33 204.96 L67.36 203.53 L68.38 202.10 L69.41 200.68 L70.44 199.28 L71.47 197.89 L72.50 196.52 L73.53 195.17 L74.55 193.85 L75.58 192.55 L76.61 191.29 L77.64 190.06 L78.67 188.86 L79.70 187.71 L80.72 186.59 L81.75 185.52 L82.78 184.50 L83.81 183.52 L84.84 182.60 L85.87 181.72 L86.89 180.91 L87.92 180.15 L88.95 179.45 L89.98 178.80 L91.01 178.22 L92.04 177.70 L93.06 177.25 L94.09 176.86 L95.12 176.53 L96.15 176.28 L97.18 176.08 L98.21 175.96 L99.23 175.90 L100.26 175.92 L101.29 175.99 L102.32 176.14 L103.35 176.35 L104.38 176.63 L105.40 176.98 L106.43 177.39 L107.46 177.87 L108.49 178.41 L109.52 179.01 L110.55 179.67 L111.57 180.39 L112.60 181.17 L113.63 182.01 L114.66 182.90 L115.69 183.84 L116.72 184.83 L117.74 185.87 L118.77 186.96 L119.80 188.09 L120.83 189.26 L121.86 190.46 L122.89 191.71 L123.91 192.98 L124.94 194.29 L125.97 195.62 L127.00 196.97 L128.03 198.35 L129.06 199.75 L130.08 201.16 L131.11 202.58 L132.14 204.01 L133.17 205.44 L134.20 206.88 L135.23 208.32 L136.25 209.75 L137.28 211.17 L138.31 212.59 L139.34 213.99 L140.37 215.37 L141.40 216.73 L142.42 218.07 L143.45 219.39 L144.48 220.67 L145.51 221.93 L146.54 223.15 L147.57 224.33 L148.59 225.47 L149.62 226.57 L150.65 227.63 L151.68 228.63 L152.71 229.59 L153.74 230.50 L154.76 231.35 L155.79 232.15 L156.82 232.89 L157.85 233.58 L158.88 234.20 L159.91 234.76 L160.93 235.26 L161.96 235.69 L162.99 236.06 L164.02 236.36 L165.05 236.60 L166.08 236.76 L167.10 236.87 L168.13 236.90 L169.16 236.87 L170.19 236.76 L171.22 236.60 L172.25 236.36 L173.27 236.06 L174.30 235.69 L175.33 235.26 L176.36 234.76 L177.39 234.20 L178.42 233.58 L179.44 232.89 L180.47 232.15 L181.50 231.35 L182.53 230.50 L183.56 229.59 L184.59 228.63 L185.61 227.63 L186.64 226.57 L187.67 225.47 L188.70 224.33 L189.73 223.15 L190.76 221.93 L191.78 220.67 L192.81 219.39 L193.84 218.07 L194.87 216.73 L195.90 215.37 L196.93 213.99 L197.95 212.59 L198.98 211.17 L200.01 209.75 L201.04 208.32 L202.07 206.88 L203.10 205.44 L204.12 204.01 L205.15 202.58 L206.18 201.16 L207.21 199.75 L208.24 198.35 L209.27 196.97 L210.29 195.62 L211.32 194.29 L212.35 192.98 L213.38 191.71 L214.41 190.46 L215.43 189.26 L216.46 188.09 L217.49 186.96 L218.52 185.87 L219.55 184.83 L220.58 183.84 L221.60 182.90 L222.63 182.01 L223.66 181.17 L224.69 180.39 L225.72 179.67 L226.75 179.01 L227.77 178.41 L228.80 177.87 L229.83 177.39 L230.86 176.98 L231.89 176.63 L232.92 176.35 L233.94 176.14 L234.97 175.99 L236.00 175.92 L237.03 175.90 L238.06 175.96 L239.09 176.08 L240.11 176.28 L241.14 176.53 L242.17 176.86 L243.20 177.25 L244.23 177.70 L245.26 178.22 L246.28 178.80 L247.31 179.45 L248.34 180.15 L249.37 180.91 L250.40 181.72 L251.43 182.60 L252.45 183.52 L253.48 184.50 L254.51 185.52 L255.54 186.59 L256.57 187.71 L257.60 188.86 L258.62 190.06 L259.65 191.29 L260.68 192.55 L261.71 193.85 L262.74 195.17 L263.77 196.52 L264.79 197.89 L265.82 199.28 L266.85 200.68 L267.88 202.10 L268.91 203.53 L269.94 204.96 L270.96 206.40 L271.99 207.84 L273.02 209.27 L274.05 210.70 L275.08 212.12 L276.11 213.52 L277.13 214.91 L278.16 216.28 L279.19 217.63 L280.22 218.95 L281.25 220.25 L282.28 221.51 L283.30 222.74 L284.33 223.94 L285.36 225.09 L286.39 226.21 L287.42 227.28 L288.45 228.30 L289.47 229.28 L290.50 230.20 L291.53 231.08 L292.56 231.89 L293.59 232.65 L294.62 233.35 L295.64 234.00 L296.67 234.58 L297.70 235.10 L298.73 235.55 L299.76 235.94 L300.79 236.27 L301.81 236.52 L302.84 236.72 L303.87 236.84 L304.90 236.90 L305.93 236.88 L306.96 236.81 L307.98 236.66 L309.01 236.45 L310.04 236.17 L311.07 235.82 L312.10 235.41 L313.13 234.93 L314.15 234.39 L315.18 233.79 L316.21 233.13 L317.24 232.41 L318.27 231.63 L319.30 230.79 L320.32 229.90 L321.35 228.96 L322.38 227.97 L323.41 226.93 L324.44 225.84 L325.47 224.71 L326.49 223.54 L327.52 222.34 L328.55 221.09 L329.58 219.82 L330.61 218.51 L331.64 217.18 L332.66 215.83 L333.69 214.45 L334.72 213.05 L335.75 211.64 L336.78 210.22 L337.81 208.79 L338.83 207.36 L339.86 205.92 L340.89 204.48 L341.92 203.05 L342.95 201.63 L343.98 200.21 L345.00 198.81 L346.03 197.43 L347.06 196.07 L348.09 194.73 L349.12 193.41 L350.15 192.13 L351.17 190.87 L352.20 189.65 L353.23 188.47 L354.26 187.33 L355.29 186.23 L356.32 185.17 L357.34 184.17 L358.37 183.21 L359.40 182.30 L360.43 181.45 L361.46 180.65 L362.49 179.91 L363.51 179.22 L364.54 178.60 L365.57 178.04 L366.60 177.54 L367.63 177.11 L368.65 176.74 L369.68 176.44 L370.71 176.20 L371.74 176.04 L372.77 175.93 L373.80 175.90 L374.82 175.93 L375.85 176.04 L376.88 176.20 L377.91 176.44 L378.94 176.74 L379.97 177.11 L380.99 177.54 L382.02 178.04 L383.05 178.60 L384.08 179.22 L385.11 179.91 L386.14 180.65 L387.16 181.45 L388.19 182.30 L389.22 183.21 L390.25 184.17 L391.28 185.17 L392.31 186.23 L393.33 187.33 L394.36 188.47 L395.39 189.65 L396.42 190.87 L397.45 192.13 L398.48 193.41 L399.50 194.73 L400.53 196.07 L401.56 197.43 L402.59 198.81 L403.62 200.21 L404.65 201.63 L405.67 203.05 L406.70 204.48 L407.73 205.92 L408.76 207.36 L409.79 208.79 L410.82 210.22 L411.84 211.64 L412.87 213.05 L413.90 214.45 L414.93 215.83 L415.96 217.18 L416.99 218.51 L418.01 219.82 L419.04 221.09 L420.07 222.34 L421.10 223.54 L422.13 224.71 L423.16 225.84 L424.18 226.93 L425.21 227.97 L426.24 228.96 L427.27 229.90 L428.30 230.79 L429.33 231.63 L430.35 232.41 L431.38 233.13 L432.41 233.79 L433.44 234.39 L434.47 234.93 L435.50 235.41 L436.52 235.82 L437.55 236.17 L438.58 236.45 L439.61 236.66 L440.64 236.81 L441.67 236.88 L442.69 236.90 L443.72 236.84 L444.75 236.72 L445.78 236.52 L446.81 236.27 L447.84 235.94 L448.86 235.55 L449.89 235.10 L450.92 234.58 L451.95 234.00 L452.98 233.35 L454.01 232.65 L455.03 231.89 L456.06 231.08 L457.09 230.20 L458.12 229.28 L459.15 228.30 L460.18 227.28 L461.20 226.21 L462.23 225.09 L463.26 223.94 L464.29 222.74 L465.32 221.51 L466.35 220.25 L467.37 218.95 L468.40 217.63 L469.43 216.28 L470.46 214.91 L471.49 213.52 L472.52 212.12 L473.54 210.70 L474.57 209.27 L475.60 207.84 L476.63 206.40 L476.63 206.40 Z" fill="#00ffff" fill-opacity="0.5"/>
<path d="M65.30 206.40 L65.30 206.40 L66.33 204.96 L67.36 203.53 L68.38 202.11 L69.41 200.70 L70.44 199.30 L71.47 197.93 L72.50 196.59 L73.53 195.27 L74.55 193.99 L75.58 192.74 L76.61 191.54 L77.64 190.38 L78.67 189.27 L79.70 188.21 L80.72 187.20 L81.75 186.26 L82.78 185.37 L83.81 184.55 L84.84 183.79 L85.87 183.11 L86.89 182.49 L87.92 181.94 L88.95 181.47 L89.98 181.08 L91.01 180.76 L92.04 180.52 L93.06 180.35 L94.09 180.27 L95.12 180.26 L96.15 180.34 L97.18 180.49 L98.21 180.72 L99.23 181.03 L100.26 181.41 L101.29 181.87 L102.32 182.41 L103.35 183.01 L104.38 183.69 L105.40 184.44 L106.43 185.25 L107.46 186.13 L108.49 187.06 L109.52 188.06 L110.55 189.11 L111.57 190.22 L112.60 191.37 L113.63 192.57 L114.66 193.81 L115.69 195.08 L116.72 196.40 L117.74 197.74 L118.77 199.11 L119.80 200.50 L120.83 201.91 L121.86 203.33 L122.89 204.76 L123.91 206.19 L124.94 207.63 L125.97 209.06 L127.00 210.49 L128.03 211.90 L129.06 213.30 L130.08 214.67 L131.11 216.02 L132.14 217.34 L133.17 218.63 L134.20 219.88 L135.23 221.09 L136.25 222.26 L137.28 223.38 L138.31 224.45 L139.34 225.46 L140.37 226.41 L141.40 227.31 L142.42 228.14 L143.45 228.90 L144.48 229.60 L145.51 230.23 L146.54 230.78 L147.57 231.26 L148.59 231.67 L149.62 232.00 L150.65 232.25 L151.68 232.43 L152.71 232.52 L153.74 232.54 L154.76 232.48 L155.79 232.34 L156.82 232.12 L157.85 231.82 L158.88 231.45 L159.91 231.00 L160.93 230.47 L161.96 229.88 L162.99 229.21 L164.02 228.47 L165.05 227.67 L166.08 226.80 L167.10 225.87 L168.13 224.89 L169.16 223.84 L170.19 222.75 L171.22 221.60 L172.25 220.41 L173.27 219.17 L174.30 217.90 L175.33 216.59 L176.36 215.26 L177.39 213.89 L178.42 212.50 L179.44 211.10 L180.47 209.68 L181.50 208.25 L182.53 206.81 L183.56 205.37 L184.59 203.94 L185.61 202.51 L186.64 201.10 L187.67 199.70 L188.70 198.32 L189.73 196.97 L190.76 195.64 L191.78 194.35 L192.81 193.09 L193.84 191.88 L194.87 190.70 L195.90 189.58 L196.93 188.50 L197.95 187.48 L198.98 186.52 L200.01 185.62 L201.04 184.78 L202.07 184.00 L203.10 183.30 L204.12 182.66 L205.15 182.09 L206.18 181.60 L207.21 181.18 L208.24 180.84 L209.27 180.58 L210.29 180.39 L211.32 180.29 L212.35 180.26 L213.38 180.31 L214.41 180.44 L215.43 180.65 L216.46 180.93 L217.49 181.30 L218.52 181.73 L219.55 182.25 L220.58 182.83 L221.60 183.49 L222.63 184.22 L223.66 185.01 L224.69 185.87 L225.72 186.79 L226.75 187.77 L227.77 188.81 L228.80 189.89 L229.83 191.03 L230.86 192.22 L231.89 193.45 L232.92 194.71 L233.94 196.02 L234.97 197.35 L236.00 198.71 L237.03 200.10 L238.06 201.50 L239.09 202.92 L240.11 204.35 L241.14 205.78 L242.17 207.22 L243.20 208.66 L244.23 210.08 L245.26 211.50 L246.28 212.90 L247.31 214.28 L248.34 215.64 L249.37 216.97 L250.40 218.27 L251.43 219.53 L252.45 220.75 L253.48 221.93 L254.51 223.06 L255.54 224.15 L256.57 225.17 L257.60 226.15 L258.62 227.06 L259.65 227.91 L260.68 228.69 L261.71 229.41 L262.74 230.05 L263.77 230.63 L264.79 231.13 L265.82 231.56 L266.85 231.91 L267.88 232.19 L268.91 232.38 L269.94 232.50 L270.96 232.54 L271.99 232.50 L273.02 232.38 L274.05 232.19 L275.08 231.91 L276.11 231.56 L277.13 231.13 L278.16 230.63 L279.19 230.05 L280.22 229.41 L281.25 228.69 L282.28 227.91 L283.30 227.06 L284.33 226.15 L285.36 225.17 L286.39 224.15 L287.42 223.06 L288.45 221.93 L289.47 220.75 L290.50 219.53 L291.53 218.27 L292.56 216.97 L293.59 215.64 L294.62 214.28 L295.64 212.90 L296.67 211.50 L297.70 210.08 L298.73 208.66 L299.76 207.22 L300.79 205.78 L301.81 204.35 L302.84 202.92 L303.87 201.50 L304.90 200.10 L305.93 198.71 L306.96 197.35 L307.98 196.02 L309.01 194.71 L310.04 193.45 L311.07 192.22 L312.10 191.03 L313.13 189.89 L314.15 188.81 L315.18 187.77 L316.21 186.79 L317.24 185.87 L318.27 185.01 L319.30 184.22 L320.32 183.49 L321.35 182.83 L322.38 182.25 L323.41 181.73 L324.44 181.30 L325.47 180.93 L326.49 180.65 L327.52 180.44 L328.55 180.31 L329.58 180.26 L330.61 180.29 L331.64 180.39 L332.66 180.58 L333.69 180.84 L334.72 181.18 L335.75 181.60 L336.78 182.09 L337.81 182.66 L338.83 183.30 L339.86 184.00 L340.89 184.78 L341.92 185.62 L342.95 186.52 L343.98 187.48 L345.00 188.50 L346.03 189.58 L347.06 190.70 L348.09 191.88 L349.12 193.09 L350.15 194.35 L351.17 195.64 L352.20 196.97 L353.23 198.32 L354.26 199.70 L355.29 201.10 L356.32 202.51 L357.34 203.94 L358.37 205.37 L359.40 206.81 L360.43 208.25 L361.46 209.68 L362.49 211.10 L363.51 212.50 L364.54 213.89 L365.57 215.26 L366.60 216.59 L367.63 217.90 L368.65 219.17 L369.68 220.41 L370.71 221.60 L371.74 222.75 L372.77 223.84 L373.80 224.89 L374.82 225.87 L375.85 226.80 L376.88 227.67 L377.91 228.47 L378.94 229.21 L379.97 229.88 L380.99 230.47 L382.02 231.00 L383.05 231.45 L384.08 231.82 L385.11 232.12 L386.14 232.34 L387.16 232.48 L388.19 232.54 L389.22 232.52 L390.25 232.43 L391.28 232.25 L392.31 232.00 L393.33 231.67 L394.36 231.26 L395.39 230.78 L396.42 230.23 L397.45 229.60 L398.48 228.90 L399.50 228.14 L400.53 227.31 L401.56 226.41 L402.59 225.46 L403.62 224.45 L404.65 223.38 L405.67 222.26 L406.70 221.09 L407.73 219.88 L408.76 218.63 L409.79 217.34 L410.82 216.02 L411.84 214.67 L412.87 213.30 L413.90 211.90 L414.93 210.49 L415.96 209.06 L416.99 207.63 L418.01 206.19 L419.04 204.76 L420.07 203.33 L421.10 201.91 L422.13 200.50 L423.16 199.11 L424.18 197.74 L425.21 196.40 L426.24 195.08 L427.27 193.81 L428.30 192.57 L429.33 191.37 L430.35 190.22 L431.38 189.11 L432.41 188.06 L433.44 187.06 L434.47 186.13 L435.50 185.25 L436.52 184.44 L437.55 183.69 L438.58 183.01 L439.61 182.41 L440.64 181.87 L441.67 181.41 L442.69 181.03 L443.72 180.72 L444.75 180.49 L445.78 180.34 L446.81 180.26 L447.84 180.27 L448.86 180.35 L449.89 180.52 L450.92 180.76 L451.95 181.08 L452.98 181.47 L454.01 181.94 L455.03 182.49 L456.06 183.11 L457.09 183.79 L458.12 184.55 L459.15 185.37 L460.18 186.26 L461.20 187.20 L462.23 188.21 L463.26 189.27 L464.29 190.38 L465.32 191.54 L466.35 192.74 L467.37 193.99 L468.40 195.27 L469.43 196.59 L470.46 197.93 L471.49 199.30 L472.52 200.70 L473.54 202.11 L474.57 203.53 L475.60 204.96 L476.63 206.40 L476.63 206.40 Z" fill="#ffff00" fill-opacity="0.5"/>
<path d="M65.30 206.40 L65.30 206.40 L66.33 204.96 L67.36 203.53 L68.38 202.11 L69.41 200.71 L70.44 199.33 L71.47 197.98 L72.50 196.66 L73.53 195.38 L74.55 194.14 L75.58 192.95 L76.61 191.82 L77.64 190.74 L78.67 189.72 L79.70 188.77 L80.72 187.89 L81.75 187.09 L82.78 186.35 L83.81 185.70 L84.84 185.13 L85.87 184.64 L86.89 184.24 L87.92 183.93 L88.95 183.71 L89.98 183.57 L91.01 183.52 L92.04 183.57 L93.06 183.71 L94.09 183.93 L95.12 184.24 L96.15 184.64 L97.18 185.13 L98.21 185.70 L99.23 186.35 L100.26 187.09 L101.29 187.89 L102.32 188.77 L103.35 189.72 L104.38 190.74 L105.40 191.82 L106.43 192.95 L107.46 194.14 L108.49 195.38 L109.52 196.66 L110.55 197.98 L111.57 199.33 L112.60 200.71 L113.63 202.11 L114.66 203.53 L115.69 204.96 L116.72 206.40 L117.74 207.84 L118.77 209.27 L119.80 210.69 L120.83 212.09 L121.86 213.47 L122.89 214.82 L123.91 216.14 L124.94 217.42 L125.97 218.66 L127.00 219.85 L128.03 220.98 L129.06 222.06 L130.08 223.08 L131.11 224.03 L132.14 224.91 L133.17 225.71 L134.20 226.45 L135.23 227.10 L136.25 227.67 L137.28 228.16 L138.31 228.56 L139.34 228.87 L140.37 229.09 L141.40 229.23 L142.42 229.27 L143.45 229.23 L144.48 229.09 L145.51 228.87 L146.54 228.56 L147.57 228.16 L148.59 227.67 L149.62 227.10 L150.65 226.45 L151.68 225.71 L152.71 224.91 L153.74 224.03 L154.76 223.08 L155.79 222.06 L156.82 220.98 L157.85 219.85 L158.88 218.66 L159.91 217.42 L160.93 216.14 L161.96 214.82 L162.99 213.47 L164.02 212.09 L165.05 210.69 L166.08 209.27 L167.10 207.84 L168.13 206.40 L169.16 204.96 L170.19 203.53 L171.22 202.11 L172.25 200.71 L173.27 199.33 L174.30 197.98 L175.33 196.66 L176.36 195.38 L177.39 194.14 L178.42 192.95 L179.44 191.82 L180.47 190.74 L181.50 189.72 L182.53 188.77 L183.56 187.89 L184.59 187.09 L185.61 186.35 L186.64 185.70 L187.67 185.13 L188.70 184.64 L189.73 184.24 L190.76 183.93 L191.78 183.71 L192.81 183.57 L193.84 183.52 L194.87 183.57 L195.90 183.71 L196.93 183.93 L197.95 184.24 L198.98 184.64 L200.01 185.13 L201.04 185.70 L202.07 186.35 L203.10 187.09 L204.12 187.89 L205.15 188.77 L206.18 189.72 L207.21 190.74 L208.24 191.82 L209.27 192.95 L210.29 194.14 L211.32 195.38 L212.35 196.66 L213.38 197.98 L214.41 199.33 L215.43 200.71 L216.46 202.11 L217.49 203.53 L218.52 204.96 L219.55 206.40 L220.58 207.84 L221.60 209.27 L222.63 210.69 L223.66 212.09 L224.69 213.47 L225.72 214.82 L226.75 216.14 L227.77 217.42 L228.80 218.66 L229.83 219.85 L230.86 220.98 L231.89 222.06 L232.92 223.08 L233.94 224.03 L234.97 224.91 L236.00 225.71 L237.03 226.45 L238.06 227.10 L239.09 227.67 L240.11 228.16 L241.14 228.56 L242.17 228.87 L243.20 229.09 L244.23 229.23 L245.26 229.27 L246.28 229.23 L247.31 229.09 L248.34 228.87 L249.37 228.56 L250.40 228.16 L251.43 227.67 L252.45 227.10 L253.48 226.45 L254.51 225.71 L255.54 224.91 L256.57 224.03 L257.60 223.08 L258.62 222.06 L259.65 220.98 L260.68 219.85 L261.71 218.66 L262.74 217.42 L263.77 216.14 L264.79 214.82 L265.82 213.47 L266.85 212.09 L267.88 210.69 L268.91 209.27 L269.94 207.84 L270.96 206.40 L271.99 204.96 L273.02 203.53 L274.05 202.11 L275.08 200.71 L276.11 199.33 L277.13 197.98 L278.16 196.66 L279.19 195.38 L280.22 194.14 L281.25 192.95 L282.28 191.82 L283.30 190.74 L284.33 189.72 L285.36 188.77 L286.39 187.89 L287.42 187.09 L288.45 186.35 L289.47 185.70 L290.50 185.13 L291.53 184.64 L292.56 184.24 L293.59 183.93 L294.62 183.71 L295.64 183.57 L296.67 183.52 L297.70 183.57 L298.73 183.71 L299.76 183.93 L300.79 184.24 L301.81 184.64 L302.84 185.13 L303.87 185.70 L304.90 186.35 L305.93 187.09 L306.96 187.89 L307.98 188.77 L309.01 189.72 L310.04 190.74 L311.07 191.82 L312.10 192.95 L313.13 194.14 L314.15 195.38 L315.18 196.66 L316.21 197.98 L317.24 199.33 L318.27 200.71 L319.30 202.11 L320.32 203.53 L321.35 204.96 L322.38 206.40 L323.41 207.84 L324.44 209.27 L325.47 210.69 L326.49 212.09 L327.52 213.47 L328.55 214.82 L329.58 216.14 L330.61 217.42 L331.64 218.66 L332.66 219.85 L333.69 220.98 L334.72 222.06 L335.75 223.08 L336.78 224.03 L337.81 224.91 L338.83 225.71 L339.86 226.45 L340.89 227.10 L341.92 227.67 L342.95 228.16 L343.98 228.56 L345.00 228.87 L346.03 229.09 L347.06 229.23 L348.09 229.27 L349.12 229.23 L350.15 229.09 L351.17 228.87 L352.20 228.56 L353.23 228.16 L354.26 227.67 L355.29 227.10 L356.32 226.45 L357.34 225.71 L358.37 224.91 L359.40 224.03 L360.43 223.08 L361.46 222.06 L362.49 220.98 L363.51 219.85 L364.54 218.66 L365.57 217.42 L366.60 216.14 L367.63 214.82 L368.65 213.47 L369.68 212.09 L370.71 210.69 L371.74 209.27 L372.77 207.84 L373.80 206.40 L374.82 204.96 L375.85 203.53 L376.88 202.11 L377.91 200.71 L378.94 199.33 L379.97 197.98 L380.99 196.66 L382.02 195.38 L383.05 194.14 L384.08 192.95 L385.11 191.82 L386.14 190.74 L387.16 189.72 L388.19 188.77 L389.22 187.89 L390.25 187.09 L391.28 186.35 L392.31 185.70 L393.33 185.13 L394.36 184.64 L395.39 184.24 L396.42 183.93 L397.45 183.71 L398.48 183.57 L399.50 183.52 L400.53 183.57 L401.56 183.71 L402.59 183.93 L403.62 184.24 L404.65 184.64 L405.67 185.13 L406.70 185.70 L407.73 186.35 L408.76 187.09 L409.79 187.89 L410.82 188.77 L411.84 189.72 L412.87 190.74 L413.90 191.82 L414.93 192.95 L415.96 194.14 L416.99 195.38 L418.01 196.66 L419.04 197.98 L420.07 199.33 L421.10 200.71 L422.13 202.11 L423.16 203.53 L424.18 204.96 L425.21 206.40 L426.24 207.84 L427.27 209.27 L428.30 210.69 L429.33 212.09 L430.35 213.47 L431.38 214.82 L432.41 216.14 L433.44 217.42 L434.47 218.66 L435.50 219.85 L436.52 220.98 L437.55 222.06 L438.58 223.08 L439.61 224.03 L440.64 224.91 L441.67 225.71 L442.69 226.45 L443.72 227.10 L444.75 227.67 L445.78 228.16 L446.81 228.56 L447.84 228.87 L448.86 229.09 L449.89 229.23 L450.92 229.27 L451.95 229.23 L452.98 229.09 L454.01 228.87 L455.03 228.56 L456.06 228.16 L457.09 227.67 L458.12 227.10 L459.15 226.45 L460.18 225.71 L461.20 224.91 L462.23 224.03 L463.26 223.08 L464.29 222.06 L465.32 220.98 L466.35 219.85 L467.37 218.66 L468.40 217.42 L469.43 216.14 L470.46 214.82 L471.49 213.47 L472.52 212.09 L473.54 210.69 L474.57 209.27 L475.60 207.84 L476.63 206.40 L476.63 206.40 Z" fill="#000000" fill-opacity="0.5"/>
<path d="M65.30 206.40 L65.30 206.40 L66.33 204.96 L67.36 203.54 L68.38 202.12 L69.41 200.73 L70.44 199.36 L71.47 198.03 L72.50 196.74 L73.53 195.50 L74.55 194.32 L75.58 193.19 L76.61 192.14 L77.64 191.15 L78.67 190.24 L79.70 189.41 L80.72 188.66 L81.75 188.00 L82.78 187.44 L83.81 186.97 L84.84 186.59 L85.87 186.32 L86.89 186.14 L87.92 186.07 L88.95 186.10 L89.98 186.23 L91.01 186.46 L92.04 186.79 L93.06 187.22 L94.09 187.74 L95.12 188.36 L96.15 189.06 L97.18 189.86 L98.21 190.73 L99.23 191.69 L100.26 192.72 L101.29 193.81 L102.32 194.97 L103.35 196.19 L104.38 197.45 L105.40 198.77 L106.43 200.12 L107.46 201.50 L108.49 202.90 L109.52 204.33 L110.55 205.76 L111.57 207.20 L112.60 208.63 L113.63 210.05 L114.66 211.46 L115.69 212.84 L116.72 214.18 L117.74 215.49 L118.77 216.75 L119.80 217.96 L120.83 219.11 L121.86 220.20 L122.89 221.22 L123.91 222.17 L124.94 223.04 L125.97 223.82 L127.00 224.52 L128.03 225.12 L129.06 225.64 L130.08 226.05 L131.11 226.37 L132.14 226.59 L133.17 226.71 L134.20 226.73 L135.23 226.64 L136.25 226.46 L137.28 226.17 L138.31 225.79 L139.34 225.31 L140.37 224.73 L141.40 224.06 L142.42 223.31 L143.45 222.47 L144.48 221.55 L145.51 220.55 L146.54 219.48 L147.57 218.35 L148.59 217.16 L149.62 215.91 L150.65 214.62 L151.68 213.29 L152.71 211.92 L153.74 210.52 L154.76 209.11 L155.79 207.68 L156.82 206.24 L157.85 204.80 L158.88 203.38 L159.91 201.96 L160.93 200.57 L161.96 199.21 L162.99 197.89 L164.02 196.60 L165.05 195.37 L166.08 194.19 L167.10 193.07 L168.13 192.02 L169.16 191.04 L170.19 190.14 L171.22 189.32 L172.25 188.58 L173.27 187.93 L174.30 187.38 L175.33 186.92 L176.36 186.56 L177.39 186.29 L178.42 186.13 L179.44 186.07 L180.47 186.11 L181.50 186.25 L182.53 186.49 L183.56 186.83 L184.59 187.27 L185.61 187.80 L186.64 188.43 L187.67 189.15 L188.70 189.95 L189.73 190.84 L190.76 191.80 L191.78 192.83 L192.81 193.94 L193.84 195.10 L194.87 196.33 L195.90 197.60 L196.93 198.91 L197.95 200.27 L198.98 201.65 L200.01 203.06 L201.04 204.49 L202.07 205.92 L203.10 207.36 L204.12 208.79 L205.15 210.21 L206.18 211.61 L207.21 212.99 L208.24 214.33 L209.27 215.63 L210.29 216.89 L211.32 218.09 L212.35 219.24 L213.38 220.32 L214.41 221.33 L215.43 222.27 L216.46 223.13 L217.49 223.90 L218.52 224.59 L219.55 225.19 L220.58 225.69 L221.60 226.09 L222.63 226.40 L223.66 226.61 L224.69 226.72 L225.72 226.72 L226.75 226.63 L227.77 226.43 L228.80 226.13 L229.83 225.74 L230.86 225.25 L231.89 224.66 L232.92 223.98 L233.94 223.22 L234.97 222.37 L236.00 221.44 L237.03 220.44 L238.06 219.36 L239.09 218.22 L240.11 217.02 L241.14 215.77 L242.17 214.48 L243.20 213.14 L244.23 211.77 L245.26 210.37 L246.28 208.95 L247.31 207.52 L248.34 206.08 L249.37 204.65 L250.40 203.22 L251.43 201.81 L252.45 200.42 L253.48 199.06 L254.51 197.74 L255.54 196.46 L256.57 195.24 L257.60 194.06 L258.62 192.95 L259.65 191.91 L260.68 190.94 L261.71 190.04 L262.74 189.23 L263.77 188.51 L264.79 187.87 L265.82 187.32 L266.85 186.87 L267.88 186.52 L268.91 186.27 L269.94 186.12 L270.96 186.07 L271.99 186.12 L273.02 186.27 L274.05 186.52 L275.08 186.87 L276.11 187.32 L277.13 187.87 L278.16 188.51 L279.19 189.23 L280.22 190.04 L281.25 190.94 L282.28 191.91 L283.30 192.95 L284.33 194.06 L285.36 195.24 L286.39 196.46 L287.42 197.74 L288.45 199.06 L289.47 200.42 L290.50 201.81 L291.53 203.22 L292.56 204.65 L293.59 206.08 L294.62 207.52 L295.64 208.95 L296.67 210.37 L297.70 211.77 L298.73 213.14 L299.76 214.48 L300.79 215.77 L301.81 217.02 L302.84 218.22 L303.87 219.36 L304.90 220.44 L305.93 221.44 L306.96 222.37 L307.98 223.22 L309.01 223.98 L310.04 224.66 L311.07 225.25 L312.10 225.74 L313.13 226.13 L314.15 226.43 L315.18 226.63 L316.21 226.72 L317.24 226.72 L318.27 226.61 L319.30 226.40 L320.32 226.09 L321.35 225.69 L322.38 225.19 L323.41 224.59 L324.44 223.90 L325.47 223.13 L326.49 222.27 L327.52 221.33 L328.55 220.32 L329.58 219.24 L330.61 218.09 L331.64 216.89 L332.66 215.63 L333.69 214.33 L334.72 212.99 L335.75 211.61 L336.78 210.21 L337.81 208.79 L338.83 207.36 L339.86 205.92 L340.89 204.49 L341.92 203.06 L342.95 201.65 L343.98 200.27 L345.00 198.91 L346.03 197.60 L347.06 196.33 L348.09 195.10 L349.12 193.94 L350.15 192.83 L351.17 191.80 L352.20 190.84 L353.23 189.95 L354.26 189.15 L355.29 188.43 L356.32 187.80 L357.34 187.27 L358.37 186.83 L359.40 186.49 L360.43 186.25 L361.46 186.11 L362.49 186.07 L363.51 186.13 L364.54 186.29 L365.57 186.56 L366.60 186.92 L367.63 187.38 L368.65 187.93 L369.68 188.58 L370.71 189.32 L371.74 190.14 L372.77 191.04 L373.80 192.02 L374.82 193.07 L375.85 194.19 L376.88 195.37 L377.91 196.60 L378.94 197.89 L379.97 199.21 L380.99 200.57 L382.02 201.96 L383.05 203.38 L384.08 204.80 L385.11 206.24 L386.14 207.68 L387.16 209.11 L388.19 210.52 L389.22 211.92 L390.25 213.29 L391.28 214.62 L392.31 215.91 L393.33 217.16 L394.36 218.35 L395.39 219.48 L396.42 220.55 L397.45 221.55 L398.48 222.47 L399.50 223.31 L400.53 224.06 L401.56 224.73 L402.59 225.31 L403.62 225.79 L404.65 226.17 L405.67 226.46 L406.70 226.64 L407.73 226.73 L408.76 226.71 L409.79 226.59 L410.82 226.37 L411.84 226.05 L412.87 225.64 L413.90 225.12 L414.93 224.52 L415.96 223.82 L416.99 223.04 L418.01 222.17 L419.04 221.22 L420.07 220.20 L421.10 219.11 L422.13 217.96 L423.16 216.75 L424.18 215.49 L425.21 214.18 L426.24 212.84 L427.27 211.46 L428.30 210.05 L429.33 208.63 L430.35 207.20 L431.38 205.76 L432.41 204.33 L433.44 202.90 L434.47 201.50 L435.50 200.12 L436.52 198.77 L437.55 197.45 L438.58 196.19 L439.61 194.97 L440.64 193.81 L441.67 192.72 L442.69 191.69 L443.72 190.73 L444.75 189.86 L445.78 189.06 L446.81 188.36 L447.84 187.74 L448.86 187.22 L449.89 186.79 L450.92 186.46 L451.95 186.23 L452.98 186.10 L454.01 186.07 L455.03 186.14 L456.06 186.32 L457.09 186.59 L458.12 186.97 L459.15 187.44 L460.18 188.00 L461.20 188.66 L462.23 189.41 L463.26 190.24 L464.29 191.15 L465.32 192.14 L466.35 193.19 L467.37 194.32 L468.40 195.50 L469.43 196.74 L470.46 198.03 L471.49 199.36 L472.52 200.73 L473.54 202.12 L474.57 203.54 L475.60 204.96 L476.63 206.40 L476.63 206.40 Z" fill="#ff4500" fill-opacity="0.5"/>
<path d="M65.5 96.2V316.2M476.5 96.2V316.2M65 96.5H477M65 315.9H477" stroke="#555" stroke-width="1.05" fill="none"/>
<g font-family="Liberation Sans" font-size="10.5" fill="#1a1a1a" stroke="#1a1a1a" stroke-width="0.12">
<text x="66.8" y="332.3" text-anchor="middle" textLength="6.25" lengthAdjust="spacingAndGlyphs">0</text>
<text x="131.8" y="332.3" text-anchor="middle" textLength="15.62" lengthAdjust="spacingAndGlyphs">0.5</text>
<text x="197.8" y="332.3" text-anchor="middle" textLength="6.25" lengthAdjust="spacingAndGlyphs">1</text>
<text x="262.8" y="332.3" text-anchor="middle" textLength="15.62" lengthAdjust="spacingAndGlyphs">1.5</text>
<text x="328.8" y="332.3" text-anchor="middle" textLength="6.25" lengthAdjust="spacingAndGlyphs">2</text>
<text x="393.8" y="332.3" text-anchor="middle" textLength="15.62" lengthAdjust="spacingAndGlyphs">2.5</text>
<text x="459.8" y="332.3" text-anchor="middle" textLength="6.25" lengthAdjust="spacingAndGlyphs">3</text>
<text x="59.9" y="100.2" text-anchor="end" textLength="15.62" lengthAdjust="spacingAndGlyphs">0.6</text>
<text x="59.9" y="136.8" text-anchor="end" textLength="15.62" lengthAdjust="spacingAndGlyphs">0.4</text>
<text x="59.9" y="173.4" text-anchor="end" textLength="15.62" lengthAdjust="spacingAndGlyphs">0.2</text>
<text x="59.9" y="210.0" text-anchor="end" textLength="6.25" lengthAdjust="spacingAndGlyphs">0</text>
<text x="59.9" y="246.6" text-anchor="end" textLength="19.36" lengthAdjust="spacingAndGlyphs">-0.2</text>
<text x="59.9" y="283.2" text-anchor="end" textLength="19.36" lengthAdjust="spacingAndGlyphs">-0.4</text>
<text x="59.9" y="319.8" text-anchor="end" textLength="19.36" lengthAdjust="spacingAndGlyphs">-0.6</text>
<text x="271.2" y="80.6" text-anchor="middle" textLength="260" lengthAdjust="spacingAndGlyphs">Transparente Funktionsbilder - Startbeispiel (Iteration)</text>
<text x="271.4" y="350.3" text-anchor="middle" textLength="93.2" lengthAdjust="spacingAndGlyphs">x-Achse ( Abzisse )</text>
<text transform="translate(27.3 202.6) rotate(-90)" text-anchor="middle" textLength="91.4" lengthAdjust="spacingAndGlyphs">y-Achse ( Ordinate )</text>
</g>
</svg>

<div class="a" id="status"></div>
<div class="a" id="statbox"></div>
<div class="a stt" style="left:20px">0.843284,</div><div class="a stt" style="left:71.3px">0.494864</div>

<svg class="a" style="left:480px;top:362px" width="14" height="12" viewBox="0 0 14 12"><g fill="#c2c2c2"><rect x="9" y="3" width="1" height="1"/><rect x="7" y="5" width="1" height="1"/><rect x="9" y="5" width="1" height="1"/><rect x="5" y="8" width="1" height="1"/><rect x="7" y="8" width="1" height="1"/><rect x="9" y="8" width="1" height="1"/></g><g fill="#fff"><rect x="10" y="4" width="1" height="1"/><rect x="8" y="6" width="1" height="1"/><rect x="10" y="6" width="1" height="1"/><rect x="6" y="9" width="1" height="1"/><rect x="8" y="9" width="1" height="1"/><rect x="10" y="9" width="1" height="1"/></g></svg>
<div class="a" id="sepV"></div>

<div class="a" id="editor"></div>
<div class="a" id="sel"></div>
<div class="a" id="code"># Filename:  multi.plot
#
set grid
set style fill  transparent solid 0.50 noborder
set nokey # inside left top vertical Left reverse enhanced autotitles nobox
# staat nokey -&gt; key
set style function filledcurves y1=0
set title "Transparente Funktionsbilder - Startbeispiel (Iteration)"
set xrange [0:pi] noreverse nowriteback
set yrange[-0.6:0.6] noreverse nowriteback
set ylabel "y-Achse ( Ordinate )"
set xlabel "x-Achse ( Abzisse )"

<span style="color:#fff">plot for [n=2:9] sin(x*n)/n</span></div>
<div class="a" id="cursor"></div>

<div class="a btn f" style="top:346px;letter-spacing:-0.17px;text-indent:-0.17px">GNUPLOT einbetten</div>
<div class="a btn" style="top:370px;letter-spacing:0.10px;text-indent:0.10px">Skript-Datei öffnen</div>
<div class="a btn" style="top:394px;letter-spacing:-0.04px;text-indent:-0.04px">Skript-Datei speichern unter ...</div>
<div class="a btn" style="top:441px;letter-spacing:-0.19px;text-indent:-0.19px">Graph neu zeichnen</div>
<div class="a btn" style="top:517px;letter-spacing:-0.15px;text-indent:-0.15px">GNUPLOT freigeben und beenden</div>
<div class="a btn" style="top:541px;height:16px;letter-spacing:0.04px;text-indent:0.04px">Hauptprogramm schließen</div>
</body></html>
